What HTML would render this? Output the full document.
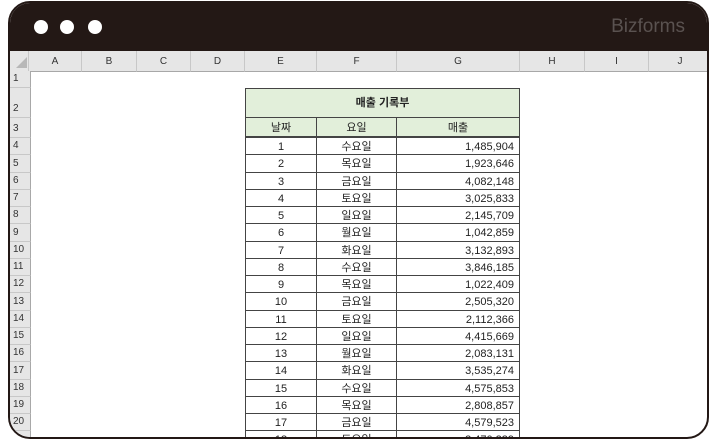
<!DOCTYPE html>
<html><head><meta charset="utf-8"><style>
*{margin:0;padding:0;box-sizing:border-box}
body{width:715px;height:440px;background:#fff;position:relative;overflow:hidden;font-family:"Liberation Sans","Noto Sans CJK KR",sans-serif}
#win{position:absolute;left:8px;top:1px;width:701px;height:438px;border:2px solid #231815;border-radius:22px 22px 22px 22px;overflow:hidden;background:#fff}
#bar{position:absolute;left:0;top:0;width:100%;height:48px;background:#231815}
.dot{position:absolute;top:17px;width:14px;height:14px;border-radius:50%;background:#fff}
#logo{position:absolute;right:22px;top:13px;color:#5a5250;font-size:19px}
.abs{position:absolute}
.ch{position:absolute;top:48px;height:21px;background:#e6e6e6;border-right:1px solid #c8c8c8;border-bottom:1px solid #a8a8a8;font-size:10px;color:#333;text-align:center;line-height:21px}
.rh{position:absolute;left:0;width:21px;background:#e6e6e6;border-bottom:1px solid #c8c8c8;border-right:1px solid #a8a8a8;font-size:10px;color:#333;padding-left:3px}
.c{position:absolute;border-right:1px solid #444;border-bottom:1px solid #444;font-size:11px;color:#222;text-align:center;padding-top:1px}
</style></head><body>
<div id="win">
<div id="bar"><div class="dot" style="left:24px"></div><div class="dot" style="left:50px"></div><div class="dot" style="left:78px"></div><div id="logo">Bizforms</div></div>
<div id="grid"></div>
</div>
<script>
var g=document.getElementById('grid'),h='';
var ox=8,oy=0;
var cols=[['',8,29],['A',29,82],['B',82,137],['C',137,191],['D',191,245],['E',245,317],['F',317,397],['G',397,520],['H',520,585],['I',585,649],['J',649,712]];
cols.forEach(function(c){h+='<div class="ch" style="left:'+(c[1]-ox-2)+'px;width:'+(c[2]-c[1])+'px">'+c[0]+'</div>';});
h+='<div class="abs" style="left:6px;top:54px;width:0;height:0;border-left:11px solid transparent;border-bottom:11px solid #b8b8b8"></div>';
var rows=[[1,70,87],[2,87,117],[3,117,137]];
for(var n=4;n<=21;n++){rows.push([n,137+(n-4)*17.25,137+(n-3)*17.25]);}
rows.forEach(function(r){var t=r[1]-oy-2,hh=r[2]-r[1];h+='<div class="rh" style="top:'+t+'px;height:'+hh+'px"><span style="position:absolute;bottom:2px;left:3px;line-height:12px">'+r[0]+'</span></div>';});
var L=245-ox-2, T=87-oy-2;
h+='<div class="abs" style="left:'+L+'px;top:'+T+'px;width:275px;height:30px;background:#e2efda;border:1px solid #444;text-align:center;line-height:29px;font-size:11px;font-weight:bold;color:#222">매출 기록부</div>';
var xs=[[245,317],[317,397],[397,520]];
var hd=['날짜','요일','매출'];
xs.forEach(function(x,i){h+='<div class="c" style="left:'+(x[0]-ox-2)+'px;top:'+(117-oy-2)+'px;width:'+(x[1]-x[0])+'px;height:20px;line-height:18px;background:#e2efda;border-bottom:2px solid #444;'+(i==0?'border-left:1px solid #444;':'')+'">'+hd[i]+'</div>';});
var data=[['수요일','1,485,904'],['목요일','1,923,646'],['금요일','4,082,148'],['토요일','3,025,833'],['일요일','2,145,709'],['월요일','1,042,859'],['화요일','3,132,893'],['수요일','3,846,185'],['목요일','1,022,409'],['금요일','2,505,320'],['토요일','2,112,366'],['일요일','4,415,669'],['월요일','2,083,131'],['화요일','3,535,274'],['수요일','4,575,853'],['목요일','2,808,857'],['금요일','4,579,523'],['토요일','3,470,239']];
data.forEach(function(d,i){var t=137+i*17.25-oy-2;var v=[String(i+1),d[0],d[1]];
xs.forEach(function(x,j){h+='<div class="c" style="left:'+(x[0]-ox-2)+'px;top:'+t+'px;width:'+(x[1]-x[0])+'px;height:17.25px;line-height:16px;'+(j==0?'border-left:1px solid #444;':'')+(j==2?'text-align:right;padding-right:5px;':'')+'">'+v[j]+'</div>';});});
g.innerHTML=h;
</script>
</body></html>
